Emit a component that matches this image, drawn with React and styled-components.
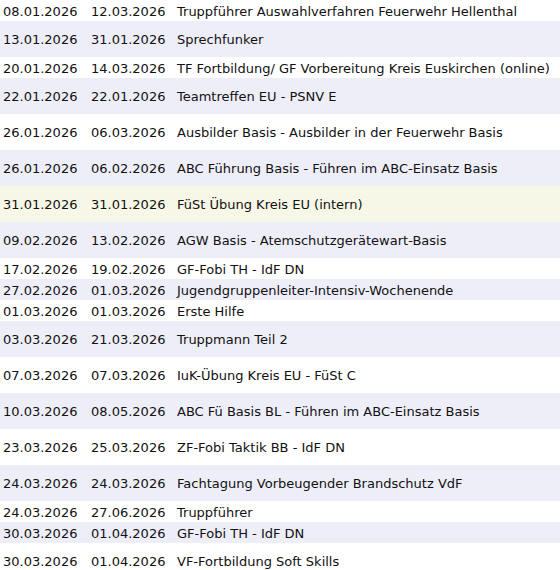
import { createGlobalStyle, styled } from 'styled-components'

const courses = [
  ['08.01.2026', '12.03.2026', 'Truppführer Auswahlverfahren Feuerwehr Hellenthal', false],
  ['13.01.2026', '31.01.2026', 'Sprechfunker', true],
  ['20.01.2026', '14.03.2026', 'TF Fortbildung/ GF Vorbereitung Kreis Euskirchen (online)', false],
  ['22.01.2026', '22.01.2026', 'Teamtreffen EU - PSNV E', true],
  ['26.01.2026', '06.03.2026', 'Ausbilder Basis - Ausbilder in der Feuerwehr Basis', true],
  ['26.01.2026', '06.02.2026', 'ABC Führung Basis - Führen im ABC-Einsatz Basis', true],
  ['31.01.2026', '31.01.2026', 'FüSt Übung Kreis EU (intern)', true, 'mark'],
  ['09.02.2026', '13.02.2026', 'AGW Basis - Atemschutzgerätewart-Basis', true],
  ['17.02.2026', '19.02.2026', 'GF-Fobi TH - IdF DN', false],
  ['27.02.2026', '01.03.2026', 'Jugendgruppenleiter-Intensiv-Wochenende', false],
  ['01.03.2026', '01.03.2026', 'Erste Hilfe', false],
  ['03.03.2026', '21.03.2026', 'Truppmann Teil 2', true],
  ['07.03.2026', '07.03.2026', 'IuK-Übung Kreis EU - FüSt C', true],
  ['10.03.2026', '08.05.2026', 'ABC Fü Basis BL - Führen im ABC-Einsatz Basis', true],
  ['23.03.2026', '25.03.2026', 'ZF-Fobi Taktik BB - IdF DN', true],
  ['24.03.2026', '24.03.2026', 'Fachtagung Vorbeugender Brandschutz VdF', true],
  ['24.03.2026', '27.06.2026', 'Truppführer', false],
  ['30.03.2026', '01.04.2026', 'GF-Fobi TH - IdF DN', false],
  ['30.03.2026', '01.04.2026', 'VF-Fortbildung Soft Skills', true],
]

const GlobalStyle = createGlobalStyle`
  html, body {
    margin: 0;
    background: #fff;
  }
`

export default function App() {
  return (
    <>
      <GlobalStyle />
      <List>
        {courses.map(([from, to, title, tall, mark], i) => (
          <Row key={i} $tall={tall} $odd={i % 2 === 1} $mark={mark}>
            <Cell>{from}</Cell>
            <Cell>{to}</Cell>
            <Cell>{title}</Cell>
          </Row>
        ))}
      </List>
    </>
  )
}

const List = styled.div`
  width: 560px;
  display: flex;
  flex-direction: column;
  font-family: 'DejaVu Sans', Verdana, sans-serif;
  font-size: 13px;
  color: #111;
`

const Row = styled.div`
  display: grid;
  grid-template-columns: 88px 86px 1fr;
  align-items: center;
  height: ${(p) => (p.$tall ? '36px' : '21px')};
  padding: 2px 3px 0;
  box-sizing: border-box;
  background: ${(p) => (p.$mark ? '#f7f7e7' : p.$odd ? '#eeeef9' : '#fff')};
`

const Cell = styled.div`
  white-space: nowrap;
  line-height: 16px;
`
